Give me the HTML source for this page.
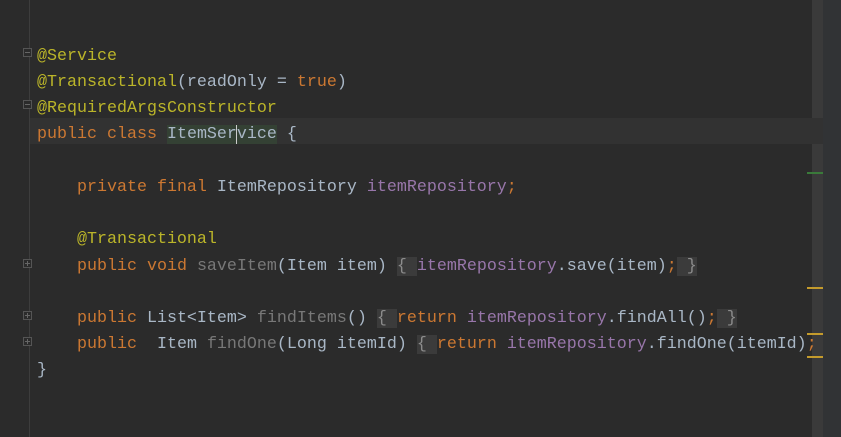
<!DOCTYPE html>
<html><head><style>
body{margin:0;width:841px;height:437px;background:#2b2b2b;overflow:hidden;position:relative;font-family:"Liberation Mono",monospace;font-size:16.67px;color:#a9b7c6}
.l{position:absolute;left:37px;white-space:pre;line-height:20px;height:20px}
.k{color:#cc7832}.a{color:#bbb529}.f{color:#9876aa}.g{color:#787878}
.fb{background:#3b3b3b;color:#8c8c8c}
.gut{position:absolute;left:29px;top:0;width:1px;height:437px;background:#3d3d3d}
.cur{position:absolute;left:30px;top:118px;width:793px;height:26px;background:#323232}
.sb{position:absolute;left:812px;top:0;width:11px;height:437px;background:#3a3a3a}
.sb2{position:absolute;left:823px;top:0;width:18px;height:437px;background:#313335}
.m{position:absolute;height:2px}
.fold{position:absolute;left:23px;width:9px;height:9px;border:1px solid #555;background:#2b2b2b;box-sizing:border-box}
.fold:after{content:"";position:absolute;left:1px;top:3px;width:5px;height:1px;background:#666}
.p:before{content:"";position:absolute;left:3px;top:1px;width:1px;height:5px;background:#666}
</style></head><body>
<div class="gut"></div>
<div class="sb"></div><div class="sb2"></div>
<div class="cur"></div>
<div class="m" style="left:807px;top:172px;width:16px;background:#3a7a3a"></div>
<div class="m" style="left:807px;top:287px;width:16px;background:#c49b2c"></div>
<div class="m" style="left:807px;top:333px;width:16px;background:#c49b2c"></div>
<div class="m" style="left:807px;top:356px;width:16px;background:#c49b2c"></div>
<div class="fold" style="top:48px"></div>
<div class="fold" style="top:100px"></div>
<div class="fold p" style="top:259px"></div>
<div class="fold p" style="top:311px"></div>
<div class="fold p" style="top:337px"></div>
<div class="l a" style="top:47px">@Service</div>
<div class="l" style="top:73px"><span class="a">@Transactional</span>(readOnly = <span class="k">true</span>)</div>
<div class="l a" style="top:99px">@RequiredArgsConstructor</div>
<div class="l" style="top:125px"><span class="k">public class </span><span style="background:#344134">ItemSer<span style="border-left:1px solid #ccc;margin-left:-1px"></span>vice</span> {</div>
<div class="l" style="top:178px">    <span class="k">private final </span>ItemRepository <span class="f">itemRepository</span><span class="k">;</span></div>
<div class="l a" style="top:230px">    @Transactional</div>
<div class="l" style="top:257px">    <span class="k">public void </span><span class="g">saveItem</span>(Item item) <span class="fb">{ </span><span class="f">itemRepository</span>.save(item)<span class="k">;</span><span class="fb"> }</span></div>
<div class="l" style="top:309px">    <span class="k">public </span>List&lt;Item&gt; <span class="g">findItems</span>() <span class="fb">{ </span><span class="k">return </span><span class="f">itemRepository</span>.findAll()<span class="k">;</span><span class="fb"> }</span></div>
<div class="l" style="top:335px">    <span class="k">public  </span>Item <span class="g">findOne</span>(Long itemId) <span class="fb">{ </span><span class="k">return </span><span class="f">itemRepository</span>.findOne(itemId)<span class="k">;</span></div>
<div class="l" style="top:361px">}</div>
</body></html>
